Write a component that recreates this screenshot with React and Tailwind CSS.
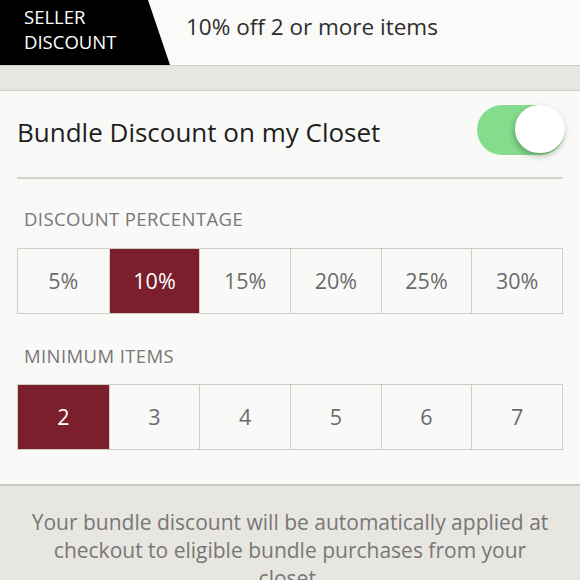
const percents = ['5%', '10%', '15%', '20%', '25%', '30%'];
const items = ['2', '3', '4', '5', '6', '7'];

function OptionRow({ options, selected }) {
  return (
    <div className="mx-[17px] grid grid-cols-6 border border-[#cfcdc8]">
      {options.map((opt, i) => (
        <div
          key={opt}
          className={`h-[64px] flex items-center justify-center text-[21.5px] ${
            i > 0 ? 'border-l border-[#cfcdc8]' : ''
          } ${opt === selected ? 'bg-[#7c1f2d] text-white' : 'text-[#6b6b6b]'}`}
        >
          {opt}
        </div>
      ))}
    </div>
  );
}

export default function App() {
  return (
    <div
      className="w-[580px] h-[580px] overflow-hidden bg-[#e8e6e1]"
      style={{ fontFamily: '"Open Sans", Lato, sans-serif' }}
    >
      {/* header */}
      <header className="h-[66px] bg-[#fafaf9] border-b border-[#cfcdc7] flex items-start relative">
        <div className="h-full w-[170px] bg-black [clip-path:polygon(0_0,148px_0,170px_100%,0_100%)] pl-[24px] pt-[4px] text-white text-[18.5px] leading-[25px]">
          <div>SELLER</div>
          <div>DISCOUNT</div>
        </div>
        <span className="ml-[16px] mt-[12px] text-[22.5px] leading-[30px] text-[#2e2e2e]">10% off 2 or more items</span>
      </header>

      <div className="h-[25px] bg-[#e8e6e1] border-b border-[#cfcdc7]" />

      {/* card */}
      <section className="bg-[#f9f9f7] border-b-2 border-[#cac8c2] pb-[34px]">
        <div className="h-[86px] flex items-center justify-between pl-[17px] pr-[15px]">
          <span className="text-[26px] text-[#1e1e1e] -mt-[4px]">Bundle Discount on my Closet</span>
          <div className="w-[88px] h-[50px] -mt-[8px] rounded-full bg-[#84dd8c] relative">
            <div className="absolute right-0 top-0 w-[50px] h-[48px] rounded-full bg-white shadow-[-1px_3px_6px_rgba(0,0,0,0.28)]" />
          </div>
        </div>
        <div className="mx-[17px] h-[2px] bg-[#d3d1cc]" />

        <div className="pl-[24px] pt-[29px] pb-[18px] text-[18.5px] tracking-[0.4px] text-[#777] leading-[22px]">DISCOUNT PERCENTAGE</div>
        <OptionRow options={percents} selected="10%" />

        <div className="pl-[24px] pt-[31px] pb-[17px] text-[18.5px] tracking-[0.4px] text-[#777] leading-[22px]">MINIMUM ITEMS</div>
        <OptionRow options={items} selected="2" />
      </section>

      <p className="px-[24px] pt-[22px] text-center text-[21px] leading-[28px] text-[#777]">
        Your bundle discount will be automatically applied at checkout to eligible bundle purchases from your closet.
      </p>
    </div>
  );
}
